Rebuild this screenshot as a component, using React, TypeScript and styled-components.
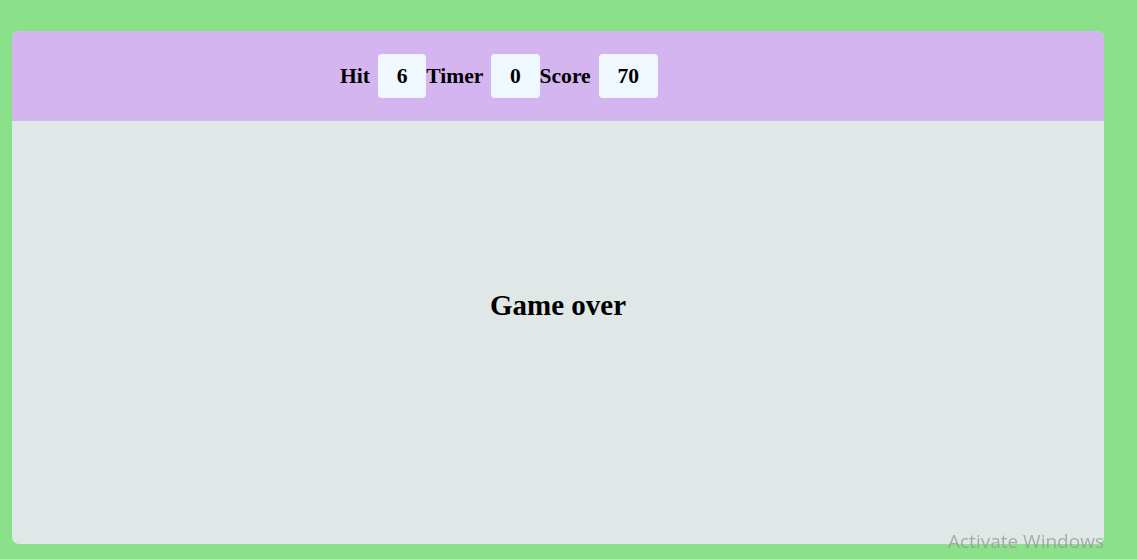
import React from "react";
import styled, { createGlobalStyle } from "styled-components";

const Global = createGlobalStyle`
  html, body {
    margin: 0;
    padding: 0;
    background: #8be08a;
    font-family: "Liberation Serif", "Times New Roman", serif;
  }
  body {
    padding: 31px 33px 15px 12px;
    overflow: hidden;
  }
`;

const Card = styled.div`
  height: 513px;
  border-radius: 7px;
  overflow: hidden;
  display: flex;
  flex-direction: column;
  background: #dfe8e6;
`;

const Header = styled.header`
  height: 90px;
  flex: none;
  background: #d5b5ef;
  display: flex;
  align-items: center;
  padding-left: 328px;
`;

const Stat = styled.div`
  display: flex;
  align-items: center;
`;

const Label = styled.span`
  font-size: 21.6px;
  font-weight: bold;
  color: #000;
  margin-right: 8px;
`;

const ValueBox = styled.span`
  display: inline-flex;
  align-items: center;
  justify-content: center;
  height: 44px;
  min-width: 47px;
  padding: 0 18.7px;
  box-sizing: border-box;
  background: #f0f8ff;
  border-radius: 4px;
  font-size: 21.6px;
  font-weight: bold;
  color: #000;
`;

const Board = styled.main`
  flex: 1;
  display: flex;
  justify-content: center;
  padding-top: 166px;
`;

const Message = styled.h2`
  margin: 0;
  font-size: 29px;
  font-weight: bold;
  line-height: 36px;
  height: 36px;
  color: #000;
`;

const Watermark = styled.div`
  position: fixed;
  left: 948px;
  top: 528px;
  font-family: "Open Sans", "Noto Sans", sans-serif;
  font-size: 19px;
  color: rgba(150, 150, 150, 0.75);
  pointer-events: none;
  white-space: nowrap;
`;

const stats = [
  { label: "Hit", value: "6" },
  { label: "Timer", value: "0" },
  { label: "Score", value: "70" },
];

export default function App() {
  return (
    <>
      <Global />
      <Card>
        <Header>
          {stats.map((s) => (
            <Stat key={s.label}>
              <Label>{s.label}</Label>
              <ValueBox>{s.value}</ValueBox>
            </Stat>
          ))}
        </Header>
        <Board>
          <Message>Game over</Message>
        </Board>
      </Card>
      <Watermark>Activate Windows</Watermark>
    </>
  );
}
